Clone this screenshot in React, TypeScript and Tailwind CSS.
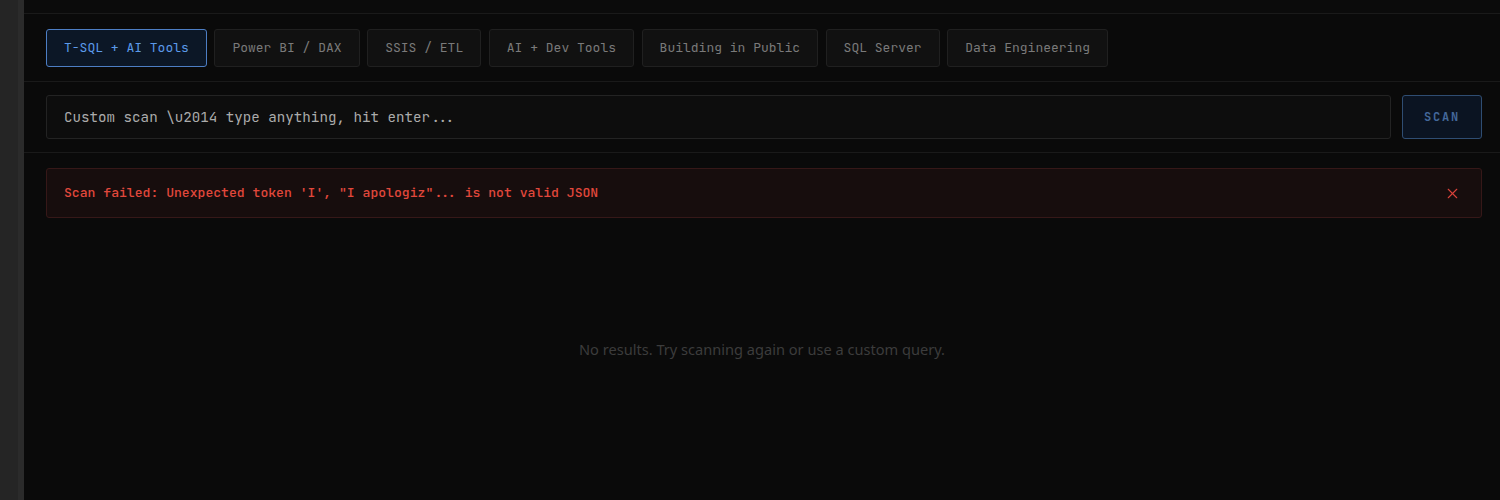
import React, { useState } from "react";
import { X } from "lucide-react";

const TOPICS = [
  "T-SQL + AI Tools",
  "Power BI / DAX",
  "SSIS / ETL",
  "AI + Dev Tools",
  "Building in Public",
  "SQL Server",
  "Data Engineering",
];

const mono = "font-['JetBrains_Mono','DejaVu_Sans_Mono','Liberation_Mono',monospace]";

export default function App() {
  const [active, setActive] = useState(0);
  const [query, setQuery] = useState("");
  const [error, setError] = useState<string | null>(
    `Scan failed: Unexpected token 'I', "I apologiz"... is not valid JSON`
  );

  return (
    <div className="flex h-[500px] w-full overflow-hidden bg-[#0a0a0a]">
      {/* collapsed side rail */}
      <div className="flex w-[24px] shrink-0">
        <div className="w-[18px] bg-[#252525]" />
        <div className="w-[6px] bg-[#2b2b2b]" />
      </div>

      <main className="flex min-w-0 flex-1 flex-col">
        <div className="h-[14px] shrink-0 border-b border-[#1a1a1a] bg-[#0b0b0b]" />

        <div className="flex gap-[7.6px] border-b border-[#1a1a1a] px-[22px] pt-[15px] pb-[14px]">
          {TOPICS.map((topic, i) => (
            <button
              key={topic}
              type="button"
              onClick={() => setActive(i)}
              className={
                i === active
                  ? `${mono} h-[38px] rounded-[3px] border border-[#4d7ec4] bg-[#0c1726] px-[17px] text-[13px] text-[#5b9aea]`
                  : `${mono} h-[38px] rounded-[3px] border border-[#202020] bg-[#111111] px-[17px] text-[13px] text-[#7a7a7a]`
              }
            >
              {topic}
            </button>
          ))}
        </div>

        <div className="flex gap-[11px] border-b border-[#1a1a1a] px-[22px] pt-[13px] pb-[13px] pr-[18px]">
          <input
            value={query}
            onChange={(e) => setQuery(e.target.value)}
            placeholder="Custom scan \u2014 type anything, hit enter..."
            className={`${mono} h-[44px] min-w-0 flex-1 rounded-[3px] border border-[#232323] bg-[#0d0d0d] px-[17px] text-[14.2px] text-[#bdbdbd] outline-none placeholder:text-[#ababab]`}
          />
          <button
            type="button"
            className={`${mono} h-[44px] w-[80px] rounded-[3px] border border-[#2f4d72] bg-[#0b1422] text-[12px] font-bold tracking-[0.15em] text-[#44689a]`}
          >
            SCAN
          </button>
        </div>

        {error && (
          <div className="px-[22px] pt-[15px] pr-[18px]">
            <div className="flex h-[50px] items-center justify-between rounded-[3px] border border-[#361818] bg-[#170d0d] pl-[17px] pr-[20px]">
              <span className={`${mono} text-[13.1px] font-medium text-[#e2483c]`}>{error}</span>
              <button type="button" onClick={() => setError(null)} className="text-[#d8423a]">
                <X size={17} strokeWidth={1.6} />
              </button>
            </div>
          </div>
        )}

        <div className="flex flex-1 items-center justify-center pb-[18px]">
          <p className="font-['Noto_Sans',sans-serif] text-[14.6px] text-[#3c3c3c]">
            No results. Try scanning again or use a custom query.
          </p>
        </div>
      </main>
    </div>
  );
}
